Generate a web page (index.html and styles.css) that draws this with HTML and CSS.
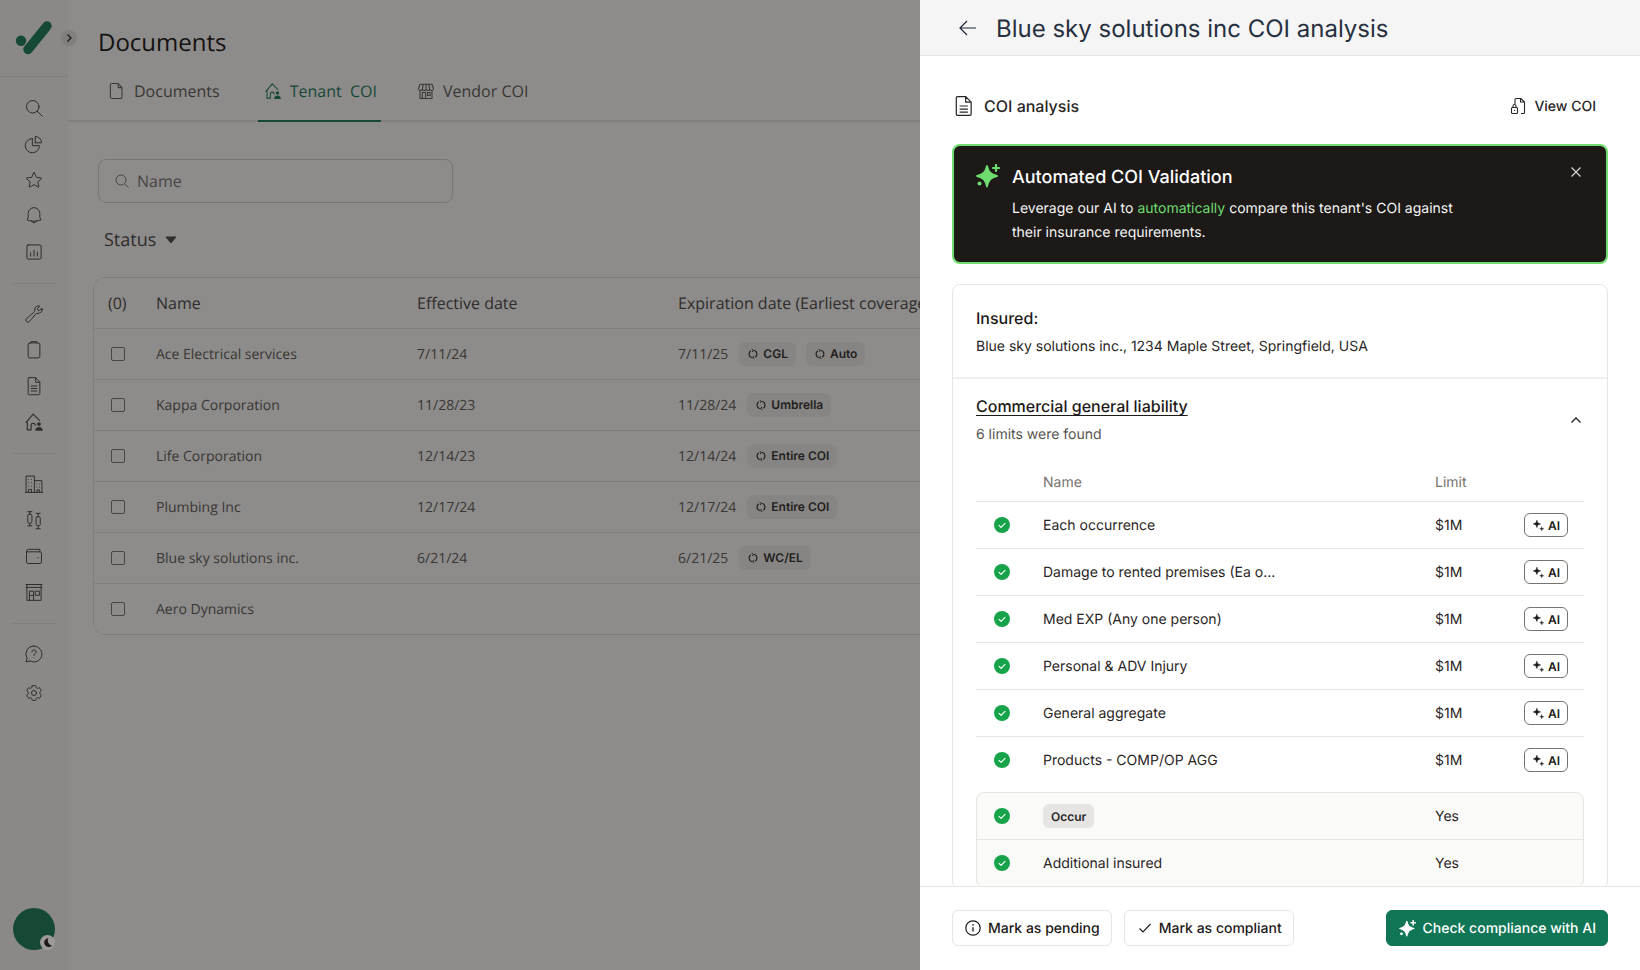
FILE: index.html
```html
<!DOCTYPE html>
<html lang="en">
<head>
<meta charset="utf-8">
<title>Blue sky solutions inc COI analysis</title>
<link rel="stylesheet" href="styles.css">
</head>
<body>
<svg class="defs" width="0" height="0" aria-hidden="true">
  <symbol id="i-check" viewBox="0 0 16 16"><circle cx="8" cy="8" r="8" fill="#16a34a"/><path d="M5 8.300l2.100 2.100L11 6.300" fill="none" stroke="#fff" stroke-width="1.100" stroke-linecap="round" stroke-linejoin="round"/></symbol>
  <symbol id="i-spark" viewBox="0 0 24 24"><path d="M11 2C12.500 8 14.500 10.500 21 12 14.500 13.500 12.500 16 11 22.500 9.500 16 7.500 13.500 1 12 7.500 10.500 9.500 8 11 2Z" fill="currentColor" stroke="currentColor" stroke-width="1.800" stroke-linejoin="round"/><path d="M20 1v6M17 4h6" stroke="currentColor" stroke-width="2.200" stroke-linecap="round"/><circle cx="3.500" cy="19.500" r="2" fill="currentColor"/></symbol>
  <symbol id="i-ai" viewBox="0 0 16 16"><path d="M6 1.500c.5 3 1.500 4 4.500 4.500-3 .5-4 1.500-4.500 4.500-.5-3-1.500-4-4.500-4.500 3-.5 4-1.500 4.500-4.500Z" fill="currentColor" stroke="currentColor" stroke-width=".7" stroke-linejoin="round"/><path d="M12 9.500c.2 1.700.8 2.300 2.500 2.500-1.700.2-2.300.8-2.500 2.500-.2-1.700-.8-2.300-2.500-2.500 1.700-.2 2.300-.8 2.500-2.500Z" fill="currentColor" stroke="currentColor" stroke-width=".5" stroke-linejoin="round"/></symbol>
  <symbol id="i-cycle" viewBox="0 0 12 12"><path d="M3.700 2.700a4 4 0 0 0 1.100 7M8.300 9.300a4 4 0 0 0-1.100-7" fill="none" stroke="currentColor" stroke-width="1.200"/><path d="M4.700 1.400 6.700 2.500 5.100 3.900M7.300 10.600 5.300 9.500 6.900 8.100" fill="none" stroke="currentColor" stroke-width="1"/></symbol>
  <symbol id="i-house" viewBox="0 0 24 24"><path d="M2.500 12.500 11 2.500l7.500 7.500M4 10.500V21.500h4.500v-5.500a2.500 2.500 0 0 1 5 0" fill="none" stroke="currentColor" stroke-width="1.400" stroke-linecap="round" stroke-linejoin="round"/><circle cx="18" cy="14.500" r="2.300" fill="currentColor"/><path d="M13.500 22.500c0-3 2-4.500 4.500-4.500s4.500 1.500 4.500 4.500Z" fill="currentColor"/></symbol>
</svg>

<div class="app">
  <aside class="rail">
    <div class="rail-top">
      <svg class="logo" width="44" height="44" viewBox="0 0 44 44"><circle cx="11" cy="24.700" r="5.200" fill="#107655"/><path d="M18 33.500 37 10" stroke="#107655" stroke-width="9.400" stroke-linecap="round"/></svg>
      <span class="rail-toggle"><svg width="12" height="12" viewBox="0 0 12 12"><path d="M4.500 2.500 8 6 4.500 9.500" fill="none" stroke="#1c1917" stroke-width="1.300"/></svg></span>
    </div>
    <nav class="rail-group rail-first">
      <span class="rail-item"><svg class="ri" viewBox="0 0 24 24"><circle cx="10.500" cy="10.500" r="7.500"/><path d="M16 16l6 6"/></svg></span>
      <span class="rail-item"><svg class="ri" viewBox="0 0 24 24"><path d="M10 5.500a8.500 8.500 0 1 0 8.500 8.500H10V5.500Z"/><path d="M13.500 10.500H21A7.500 7.500 0 0 0 13.500 3v7.500Z"/></svg></span>
      <span class="rail-item"><svg class="ri" viewBox="0 0 24 24"><path d="M11.480 3.500a.56.56 0 0 1 1.040 0l2.130 5.110a.56.56 0 0 0 .47.35l5.520.44c.5.04.7.66.32.99l-4.200 3.600a.56.56 0 0 0-.18.56l1.280 5.390a.56.56 0 0 1-.84.61l-4.730-2.890a.56.56 0 0 0-.59 0l-4.730 2.890a.56.56 0 0 1-.84-.61l1.280-5.390a.56.56 0 0 0-.18-.56l-4.200-3.600a.56.56 0 0 1 .32-.99l5.520-.44a.56.56 0 0 0 .47-.35l2.130-5.110Z"/></svg></span>
      <span class="rail-item"><svg class="ri" viewBox="0 0 24 24"><path d="M14.860 18.080a24 24 0 0 0 5.450-1.310A8.970 8.970 0 0 1 19 10V9A7 7 0 0 0 5 9v1a8.970 8.970 0 0 1-1.310 6.770c1.730.64 3.550 1.090 5.450 1.310m5.720 0a24.260 24.260 0 0 1-5.720 0m5.720 0a3 3 0 0 1-5.720 0"/></svg></span>
      <span class="rail-item"><svg class="ri" viewBox="0 0 24 24"><rect x="3.500" y="3.500" width="17" height="17" rx="1.500"/><path d="M8 13v4M12 10v7M16 12v5"/></svg></span>
    </nav>
    <div class="rail-rule"></div>
    <nav class="rail-group">
      <span class="rail-item"><svg class="ri" viewBox="0 0 24 24"><path d="M21.750 6.750a4.500 4.500 0 0 1-4.880 4.480c-1.080-.09-2.220.07-2.900.9l-7.150 8.690a2.550 2.550 0 1 1-3.590-3.590l8.690-7.150c.83-.68.99-1.820.9-2.900a4.500 4.500 0 0 1 6.340-4.540L15.880 5.870a3 3 0 0 0 2.250 2.250l3.280-3.280c.22.59.34 1.230.34 1.910Z"/></svg></span>
      <span class="rail-item"><svg class="ri" viewBox="0 0 24 24"><rect x="5" y="3.500" width="14" height="18" rx="2"/><path d="M8.500 3.500V2h7v1.500"/></svg></span>
      <span class="rail-item"><svg class="ri" viewBox="0 0 24 24"><path d="M6 2h8l5 5.500V21a1.500 1.500 0 0 1-1.500 1.500h-11A1.500 1.500 0 0 1 5 21V3a1 1 0 0 1 1-1Z"/><path d="M14 2v5.500h5M8.500 12h7M8.500 15h7M8.500 18h7"/></svg></span>
      <span class="rail-item"><svg class="ri-solid" viewBox="0 0 24 24"><use href="#i-house"/></svg></span>
    </nav>
    <div class="rail-rule"></div>
    <nav class="rail-group">
      <span class="rail-item"><svg class="ri" viewBox="0 0 24 24"><path d="M2.500 22V2.500h10V22M12.500 8h9v14M1.500 22h21M5.500 6.500h.01M9 6.500h.01M5.500 10.500h.01M9 10.500h.01M5.500 14.500h.01M9 14.500h.01M15.500 12h.01M18.500 12h.01M15.500 15.500h.01M18.500 15.500h.01M5.500 22v-3.500h3.500V22M15.500 22v-3h3v3"/></svg></span>
      <span class="rail-item"><svg class="ri" viewBox="0 0 24 24"><rect x="4.500" y="5" width="5" height="11" rx="2"/><rect x="14.500" y="8" width="5" height="11" rx="2"/><path d="M7 1.500V5M7 16v3M4.500 2h5M4.500 19h5M17 4v4M17 19v3.500M14.500 4h5M14.500 22.500h5"/></svg></span>
      <span class="rail-item"><svg class="ri" viewBox="0 0 24 24"><path d="M3 6.500a2.500 2.500 0 0 1 2.500-2.500H19v3M3 6.500V19a2 2 0 0 0 2 2h14a2 2 0 0 0 2-2V9a2 2 0 0 0-2-2H4M16.500 14h.5"/></svg></span>
      <span class="rail-item"><svg class="ri" viewBox="0 0 24 24"><path d="M2.500 3h19M2.500 6.500h19M3.500 3v19h17V3M6.500 22V11h5v11M14 11h4.500v5H14zM6.500 16h5"/></svg></span>
    </nav>
    <div class="rail-rule"></div>
    <nav class="rail-group">
      <span class="rail-item"><svg class="ri" viewBox="0 0 24 24"><path d="M12 2.500a9.500 9.500 0 1 1-4.800 17.700L2.500 21.500l1.200-4.500A9.500 9.500 0 0 1 12 2.500Z"/><path d="M9.500 9.500a2.500 2.500 0 1 1 3.800 2.100c-.8.500-1.300 1-1.300 2M12 16.500h.01"/></svg></span>
      <span class="rail-item rail-gear"><svg class="ri" viewBox="0 0 24 24"><path d="M9.594 3.940c.09-.542.56-.94 1.110-.94h2.593c.55 0 1.020.398 1.110.94l.213 1.281c.063.374.313.686.645.870.074.04.147.083.22.127.325.196.72.257 1.075.124l1.217-.456a1.125 1.125 0 0 1 1.370.49l1.296 2.247a1.125 1.125 0 0 1-.26 1.431l-1.003.827c-.293.241-.438.613-.43.992a7.723 7.723 0 0 1 0 .255c-.008.378.137.75.43.991l1.004.827c.424.35.534.955.26 1.430l-1.298 2.247a1.125 1.125 0 0 1-1.369.491l-1.217-.456c-.355-.133-.75-.072-1.076.124a6.470 6.470 0 0 1-.22.128c-.331.183-.581.495-.644.869l-.213 1.281c-.09.543-.56.94-1.110.94h-2.594c-.55 0-1.019-.398-1.110-.94l-.213-1.281c-.062-.374-.312-.686-.644-.87a6.520 6.520 0 0 1-.22-.127c-.325-.196-.72-.257-1.076-.124l-1.217.456a1.125 1.125 0 0 1-1.369-.49l-1.297-2.247a1.125 1.125 0 0 1 .26-1.431l1.004-.827c.292-.24.437-.613.43-.991a6.932 6.932 0 0 1 0-.255c.007-.38-.138-.751-.43-.992l-1.004-.827a1.125 1.125 0 0 1-.26-1.430l1.297-2.247a1.125 1.125 0 0 1 1.370-.491l1.216.456c.356.133.751.072 1.076-.124.072-.044.146-.086.22-.128.332-.183.582-.495.644-.869l.214-1.280Z"/><circle cx="12" cy="12" r="3"/></svg></span>
    </nav>
    <div class="avatar"><span class="moon"><svg width="11" height="11" viewBox="0 0 12 12"><path d="M7 1a5 5 0 1 0 4 8.500A5.800 5.800 0 0 1 7 1Z" fill="#1c1917"/></svg></span></div>
  </aside>

  <main class="main">
    <h1 class="page-title">Documents</h1>
    <div class="tabs">
      <a class="tab tab-docs"><svg class="tab-icon" viewBox="0 0 24 24"><path d="M6.500 2h8.500L20 7.500V20a2 2 0 0 1-2 2H6.500a2 2 0 0 1-2-2V4a2 2 0 0 1 2-2Z"/><path d="M15 2v5.500h5"/></svg>Documents</a>
      <a class="tab tab-active"><svg class="tab-icon-solid" viewBox="0 0 24 24"><use href="#i-house"/></svg>Tenant&nbsp; COI</a>
      <a class="tab tab-vendor"><svg class="tab-icon" viewBox="0 0 24 24"><path d="M4 3h16l2 5.500a2.500 2.500 0 0 1-5 .5 2.500 2.500 0 0 1-5 0 2.500 2.500 0 0 1-5 0 2.500 2.500 0 0 1-5-.5L4 3ZM4 11.500V22h16V11.500M8.500 3 7 9M15.500 3 17 9M12 3v6M7 14h4.500v8H7zM14 14h3.500v4H14z"/></svg>Vendor COI</a>
    </div>
    <label class="search">
      <svg class="search-icon" viewBox="0 0 24 24"><circle cx="10.500" cy="10.500" r="7.500"/><path d="M16 16l6 6"/></svg>
      <span>Name</span>
    </label>
    <div class="status">Status <svg width="12" height="8" viewBox="0 0 12 8"><path d="M1 1h10L6 7Z" fill="#44403c" stroke="#44403c" stroke-linejoin="round"/></svg></div>

    <div class="table">
      <div class="row row-head"><span class="count">(0)</span><span>Name</span><span>Effective date</span><span>Expiration date (Earliest coverage)</span></div>
      <div class="row"><span class="box"></span><span>Ace Electrical services</span><span>7/11/24</span><span class="exp">7/11/25 <span class="tag"><svg class="ci" viewBox="0 0 12 12"><use href="#i-cycle"/></svg>CGL</span><span class="tag"><svg class="ci" viewBox="0 0 12 12"><use href="#i-cycle"/></svg>Auto</span></span></div>
      <div class="row"><span class="box"></span><span>Kappa Corporation</span><span>11/28/23</span><span class="exp">11/28/24 <span class="tag"><svg class="ci" viewBox="0 0 12 12"><use href="#i-cycle"/></svg>Umbrella</span></span></div>
      <div class="row"><span class="box"></span><span>Life Corporation</span><span>12/14/23</span><span class="exp">12/14/24 <span class="tag"><svg class="ci" viewBox="0 0 12 12"><use href="#i-cycle"/></svg>Entire COI</span></span></div>
      <div class="row"><span class="box"></span><span>Plumbing Inc</span><span>12/17/24</span><span class="exp">12/17/24 <span class="tag"><svg class="ci" viewBox="0 0 12 12"><use href="#i-cycle"/></svg>Entire COI</span></span></div>
      <div class="row"><span class="box"></span><span>Blue sky solutions inc.</span><span>6/21/24</span><span class="exp">6/21/25 <span class="tag"><svg class="ci" viewBox="0 0 12 12"><use href="#i-cycle"/></svg>WC/EL</span></span></div>
      <div class="row row-last"><span class="box"></span><span>Aero Dynamics</span><span></span><span></span></div>
    </div>
  </main>
</div>

<div class="scrim"></div>

<section class="panel">
  <header class="panel-head">
    <svg class="back" width="20" height="20" viewBox="0 0 20 20"><path d="M18 10H2M9 3l-7 7 7 7" fill="none" stroke="#1f2937" stroke-width="1.200"/></svg>
    <h2>Blue sky solutions inc COI analysis</h2>
  </header>
  <div class="panel-body">
    <div class="coi-row">
      <span class="coi-label"><svg width="22" height="22" viewBox="0 0 20 20"><path d="M4 1.500h7.500L16.500 6.500v11a1 1 0 0 1-1 1H4a1 1 0 0 1-1-1V2.500a1 1 0 0 1 1-1Z M11.500 1.500v5h5M6 10h7.500M6 12.800h7.500M6 15.600h7.500" fill="none" stroke="#292524" stroke-width="1.100"/></svg>COI analysis</span>
      <span class="coi-view"><svg width="16" height="18" viewBox="0 0 16 18"><path d="M6 1.500h5l3.500 3.500v10.500a1 1 0 0 1-1 1H11M10.500 1.500V5h4M6 1.500a1 1 0 0 0-1 1V7" fill="none" stroke="#292524" stroke-width="1.100"/><rect x="1.500" y="10.500" width="6" height="6" rx="1" fill="none" stroke="#292524" stroke-width="1.100"/><path d="M3 10.500V9a1.500 1.500 0 0 1 3 0v1.500M4.500 13v1" fill="none" stroke="#292524" stroke-width="1.100"/></svg>View COI</span>
    </div>

    <div class="banner">
      <svg class="banner-star" viewBox="0 0 24 24"><use href="#i-spark"/></svg>
      <div class="banner-text">
        <h3>Automated COI Validation</h3>
        <p>Leverage our AI to <em>automatically</em> compare this tenant's COI against their insurance requirements.</p>
      </div>
      <svg class="banner-close" width="12" height="12" viewBox="0 0 12 12"><path d="M1.500 1.500l9 9M10.500 1.500l-9 9" stroke="#d6d3d1" stroke-width="1.200"/></svg>
    </div>

    <div class="card">
      <div class="insured">
        <div class="insured-label">Insured:</div>
        <div class="insured-value">Blue sky solutions inc., 1234 Maple Street, Springfield, USA</div>
      </div>
      <div class="cgl">
        <div class="cgl-head">
          <div>
            <div class="cgl-title">Commercial general liability</div>
            <div class="cgl-sub">6 limits were found</div>
          </div>
          <svg class="cgl-chev" width="12" height="8" viewBox="0 0 12 8"><path d="M1.500 6.500 6 2l4.500 4.500" fill="none" stroke="#292524" stroke-width="1.300"/></svg>
        </div>
        <div class="limit limit-head"><span></span><span>Name</span><span>Limit</span><span></span></div>
        <div class="limit"><svg class="ok" viewBox="0 0 16 16"><use href="#i-check"/></svg><span>Each occurrence</span><span>$1M</span><span class="ai"><svg viewBox="0 0 16 16"><use href="#i-ai"/></svg>AI</span></div>
        <div class="limit"><svg class="ok" viewBox="0 0 16 16"><use href="#i-check"/></svg><span>Damage to rented premises (Ea o...</span><span>$1M</span><span class="ai"><svg viewBox="0 0 16 16"><use href="#i-ai"/></svg>AI</span></div>
        <div class="limit"><svg class="ok" viewBox="0 0 16 16"><use href="#i-check"/></svg><span>Med EXP (Any one person)</span><span>$1M</span><span class="ai"><svg viewBox="0 0 16 16"><use href="#i-ai"/></svg>AI</span></div>
        <div class="limit"><svg class="ok" viewBox="0 0 16 16"><use href="#i-check"/></svg><span>Personal &amp; ADV Injury</span><span>$1M</span><span class="ai"><svg viewBox="0 0 16 16"><use href="#i-ai"/></svg>AI</span></div>
        <div class="limit"><svg class="ok" viewBox="0 0 16 16"><use href="#i-check"/></svg><span>General aggregate</span><span>$1M</span><span class="ai"><svg viewBox="0 0 16 16"><use href="#i-ai"/></svg>AI</span></div>
        <div class="limit limit-end"><svg class="ok" viewBox="0 0 16 16"><use href="#i-check"/></svg><span>Products - COMP/OP AGG</span><span>$1M</span><span class="ai"><svg viewBox="0 0 16 16"><use href="#i-ai"/></svg>AI</span></div>
        <div class="extras">
          <div class="limit extra"><svg class="ok" viewBox="0 0 16 16"><use href="#i-check"/></svg><span><span class="chip">Occur</span></span><span>Yes</span><span></span></div>
          <div class="limit extra"><svg class="ok" viewBox="0 0 16 16"><use href="#i-check"/></svg><span>Additional insured</span><span>Yes</span><span></span></div>
        </div>
      </div>
    </div>
  </div>
  <footer class="panel-foot">
    <button class="btn"><svg width="16" height="16" viewBox="0 0 16 16"><circle cx="8" cy="8" r="7.200" fill="none" stroke="#1c1917" stroke-width="1.200"/><path d="M8 7.200V11.500" stroke="#1c1917" stroke-width="1.300"/><circle cx="8" cy="4.900" r=".8" fill="#1c1917"/></svg><span class="btn-label">Mark as pending</span></button>
    <button class="btn btn-comp"><svg width="16" height="16" viewBox="0 0 16 16"><path d="M2.500 8.500l3.500 3.500 7.500-8" fill="none" stroke="#1c1917" stroke-width="1.100"/></svg><span class="btn-label">Mark as compliant</span></button>
    <button class="btn btn-primary"><svg class="btn-star" viewBox="0 0 24 24"><use href="#i-spark"/></svg><span class="btn-label">Check compliance with AI</span></button>
  </footer>
</section>
</body>
</html>
```

FILE: styles.css
```css
* { box-sizing: border-box; }
html, body { margin: 0; height: 100%; overflow: hidden; }
body { font-family: "Open Sans", sans-serif; color: #1c1917; background: #fff; text-rendering: geometricPrecision; }
.defs { position: absolute; }

.app { display: flex; height: 970px; }

/* left rail */
.rail { position: relative; width: 68px; flex: none; background: #f8f8f7; display: flex; flex-direction: column; align-items: center; }
.rail-top { width: 100%; height: 77px; flex: none; border-bottom: 1px solid #e7e5e4; padding: 16px 0 0 10px; }
.logo { display: block; }
.rail-toggle { position: absolute; left: 61px; top: 30px; width: 16px; height: 16px; border-radius: 50%; background: #e7e5e4; display: flex; align-items: center; justify-content: center; }
.rail-group { display: flex; flex-direction: column; }
.rail-first { margin-top: 13px; }
.rail-item { width: 36px; height: 36px; display: flex; align-items: center; justify-content: center; color: #44403c; }
.rail-gear { margin-top: 3px; }
.ri { width: 20px; height: 20px; fill: none; stroke: #44403c; stroke-width: 1.200; stroke-linejoin: round; stroke-linecap: round; }
.ri-solid { width: 20px; height: 20px; }
.rail-rule { width: 44px; height: 1px; background: #e7e5e4; margin: 13px 0 12px; flex: none; }
.avatar { position: relative; margin-top: auto; margin-bottom: 20px; width: 42px; height: 42px; border-radius: 50%; background: #107655; }
.moon { position: absolute; z-index: 3; right: 0; bottom: 0; width: 15px; height: 15px; border-radius: 50%; background: #9c9b99; display: flex; align-items: center; justify-content: center; }

/* main */
.main { flex: 1; min-width: 0; overflow: hidden; }
.page-title { margin: 0; padding: 23px 0 0 30px; height: 62px; font-size: 24px; line-height: 40px; font-weight: 400; color: #0c0a09; }
.tabs { display: flex; gap: 34px; height: 60px; padding-left: 33px; border-bottom: 2px solid #e5e7eb; }
.tab { display: flex; align-items: center; gap: 8px; height: 60px; padding: 0 4px 2px 6px; font-size: 16px; color: #57534e; }
.tab-docs { gap: 9px; }
.tab-active { padding-bottom: 0; color: #107655; border-bottom: 2px solid #107655; }
.tab-vendor { margin-left: -4px; }
.tab-icon { width: 18px; height: 18px; fill: none; stroke: #57534e; stroke-width: 1.400; stroke-linejoin: round; }
.tab-icon-solid { width: 18px; height: 18px; }
.search { display: flex; align-items: center; gap: 7px; width: 355px; height: 44px; margin: 37px 0 0 30px; padding-left: 15px; border: 1px solid #cfd2d6; border-radius: 8px; font-size: 16px; color: #78716c; }
.search-icon { width: 16px; height: 16px; fill: none; stroke: #78716c; stroke-width: 1.500; }
.status { display: flex; align-items: center; gap: 9px; margin: 22px 0 0 36px; height: 30px; font-size: 18px; color: #44403c; }

.table { width: 1500px; margin: 22px 0 0 25px; border: 1px solid #e7e5e4; border-radius: 12px; font-size: 14px; color: #57534e; }
.row { display: grid; grid-template-columns: 62px 261px 261px 1fr; align-items: center; height: 51px; border-bottom: 1px solid #e7e5e4; }
.row-head { font-size: 16px; color: #44403c; }
.row-last { border-bottom: 0; height: 50px; }
.count { padding-left: 14px; }
.box { width: 14px; height: 14px; margin-left: 17px; border: 1px solid #78716c; border-radius: 2px; background: #fff; }
.exp { display: flex; align-items: center; gap: 11px; }
.exp .tag + .tag { margin-left: -1px; }
.tag { display: inline-flex; align-items: center; gap: 4px; height: 24px; padding: 0 8px; background: #f1f0ef; border-radius: 6px; font: 600 12px/1 Inter, sans-serif; color: #292524; }
.ci { width: 12px; height: 12px; }

/* scrim */
.scrim { position: fixed; inset: 0; background: rgba(28, 25, 23, .5); z-index: 1; }

/* panel */
.panel { position: fixed; z-index: 2; top: 0; right: 0; bottom: 0; width: 720px; background: #fff; display: flex; flex-direction: column; font-family: Inter, sans-serif; color: #1c1917; }
.panel-head { flex: none; height: 56px; display: flex; align-items: center; gap: 18px; padding: 1px 0 0 38px; background: #f5f5f5; border-bottom: 1px solid #e7e5e4; }
.panel-head h2 { margin: 0; font-size: 24px; font-weight: 400; color: #27303f; }
.back { margin-top: -1px; }
.panel-body { flex: 1; min-height: 0; overflow: hidden; padding: 32px 32px 0; }
.coi-row { display: flex; align-items: center; justify-content: space-between; height: 36px; margin-bottom: 20px; padding-right: 12px; font-size: 16px; font-weight: 500; color: #292524; }
.coi-label { display: flex; align-items: center; gap: 9px; padding-left: 1px; }
.coi-view { display: flex; align-items: center; gap: 8px; font-size: 14px; }

.banner { display: flex; height: 120px; padding: 19px 22px 0; background: #1c1917; border: 2px solid #6fdc6f; border-radius: 8px; color: #fff; }
.banner-star { width: 24px; height: 24px; flex: none; margin: -1px 12px 0 0; color: #6fdc6f; }
.banner-text { flex: 1; }
.banner-text h3 { margin: 0; font-size: 18px; line-height: 26px; font-weight: 500; }
.banner-text p { margin: 6px 0 0; max-width: 460px; font-size: 14px; line-height: 24px; color: #f5f5f4; }
.banner-text em { font-style: normal; color: #6fdc6f; }
.banner-close { margin: 1px 2px 0 0; }

.card { margin-top: 20px; border: 1px solid #e7e5e4; border-radius: 8px; }
.insured { padding: 21px 23px 20px; border-bottom: 2px solid #f0efee; }
.insured-label { font-size: 16px; line-height: 24px; font-weight: 500; }
.insured-value { margin-top: 7px; font-size: 14px; line-height: 20px; color: #292524; }
.cgl { padding: 15px 23px 0; }
.cgl-head { display: flex; align-items: center; justify-content: space-between; padding-right: 2px; margin-bottom: 18px; }
.cgl-title { font-size: 16px; line-height: 24px; font-weight: 500; text-decoration: underline; text-underline-offset: 3px; text-decoration-thickness: 1px; }
.cgl-sub { margin-top: 7px; font-size: 14px; line-height: 20px; color: #57534e; }
.limit { display: grid; grid-template-columns: 67px 392px 1fr 60px; align-items: center; height: 47px; border-bottom: 1px solid #e7e5e4; font-size: 14px; color: #292524; }
.limit-head { height: 39px; color: #78716c; }
.limit-end { border-bottom: 0; height: 46px; }
.ok { width: 16px; height: 16px; margin-left: 18px; }
.extra .ok { margin-left: 17px; }
.ai { display: flex; align-items: center; justify-content: center; gap: 3px; width: 44px; height: 24px; border: 1px solid #78716c; border-radius: 6px; font-size: 12px; font-weight: 600; color: #1c1917; }
.ai svg { width: 13px; height: 13px; }
.extras { margin-top: 9px; border: 1px solid #e7e5e4; border-radius: 8px; background: #fafaf9; }
.extra { grid-template-columns: 66px 392px 1fr 60px; }
.chip { display: inline-flex; align-items: center; height: 24px; padding: 0 8px; background: #e7e5e4; border-radius: 6px; font-size: 12px; font-weight: 600; color: #292524; }

.panel-foot { flex: none; height: 84px; display: flex; align-items: flex-start; gap: 12px; padding: 23px 32px 0; background: #fff; border-top: 1px solid #e7e5e4; }
.btn { display: inline-flex; align-items: center; justify-content: center; gap: 7px; height: 36px; padding: 0 11px 0 12px; border: 1px solid #e7e5e4; border-radius: 6px; background: #fff; font: 500 14px/1 Inter, sans-serif; color: #1c1917; text-rendering: geometricPrecision; }
.btn-label { padding-top: 2px; }
.btn-comp { gap: 6px; }
.btn-primary { margin-left: auto; background: #107655; border-color: #107655; color: #fff; }
.btn-star { width: 17px; height: 17px; color: #fff; }
```
